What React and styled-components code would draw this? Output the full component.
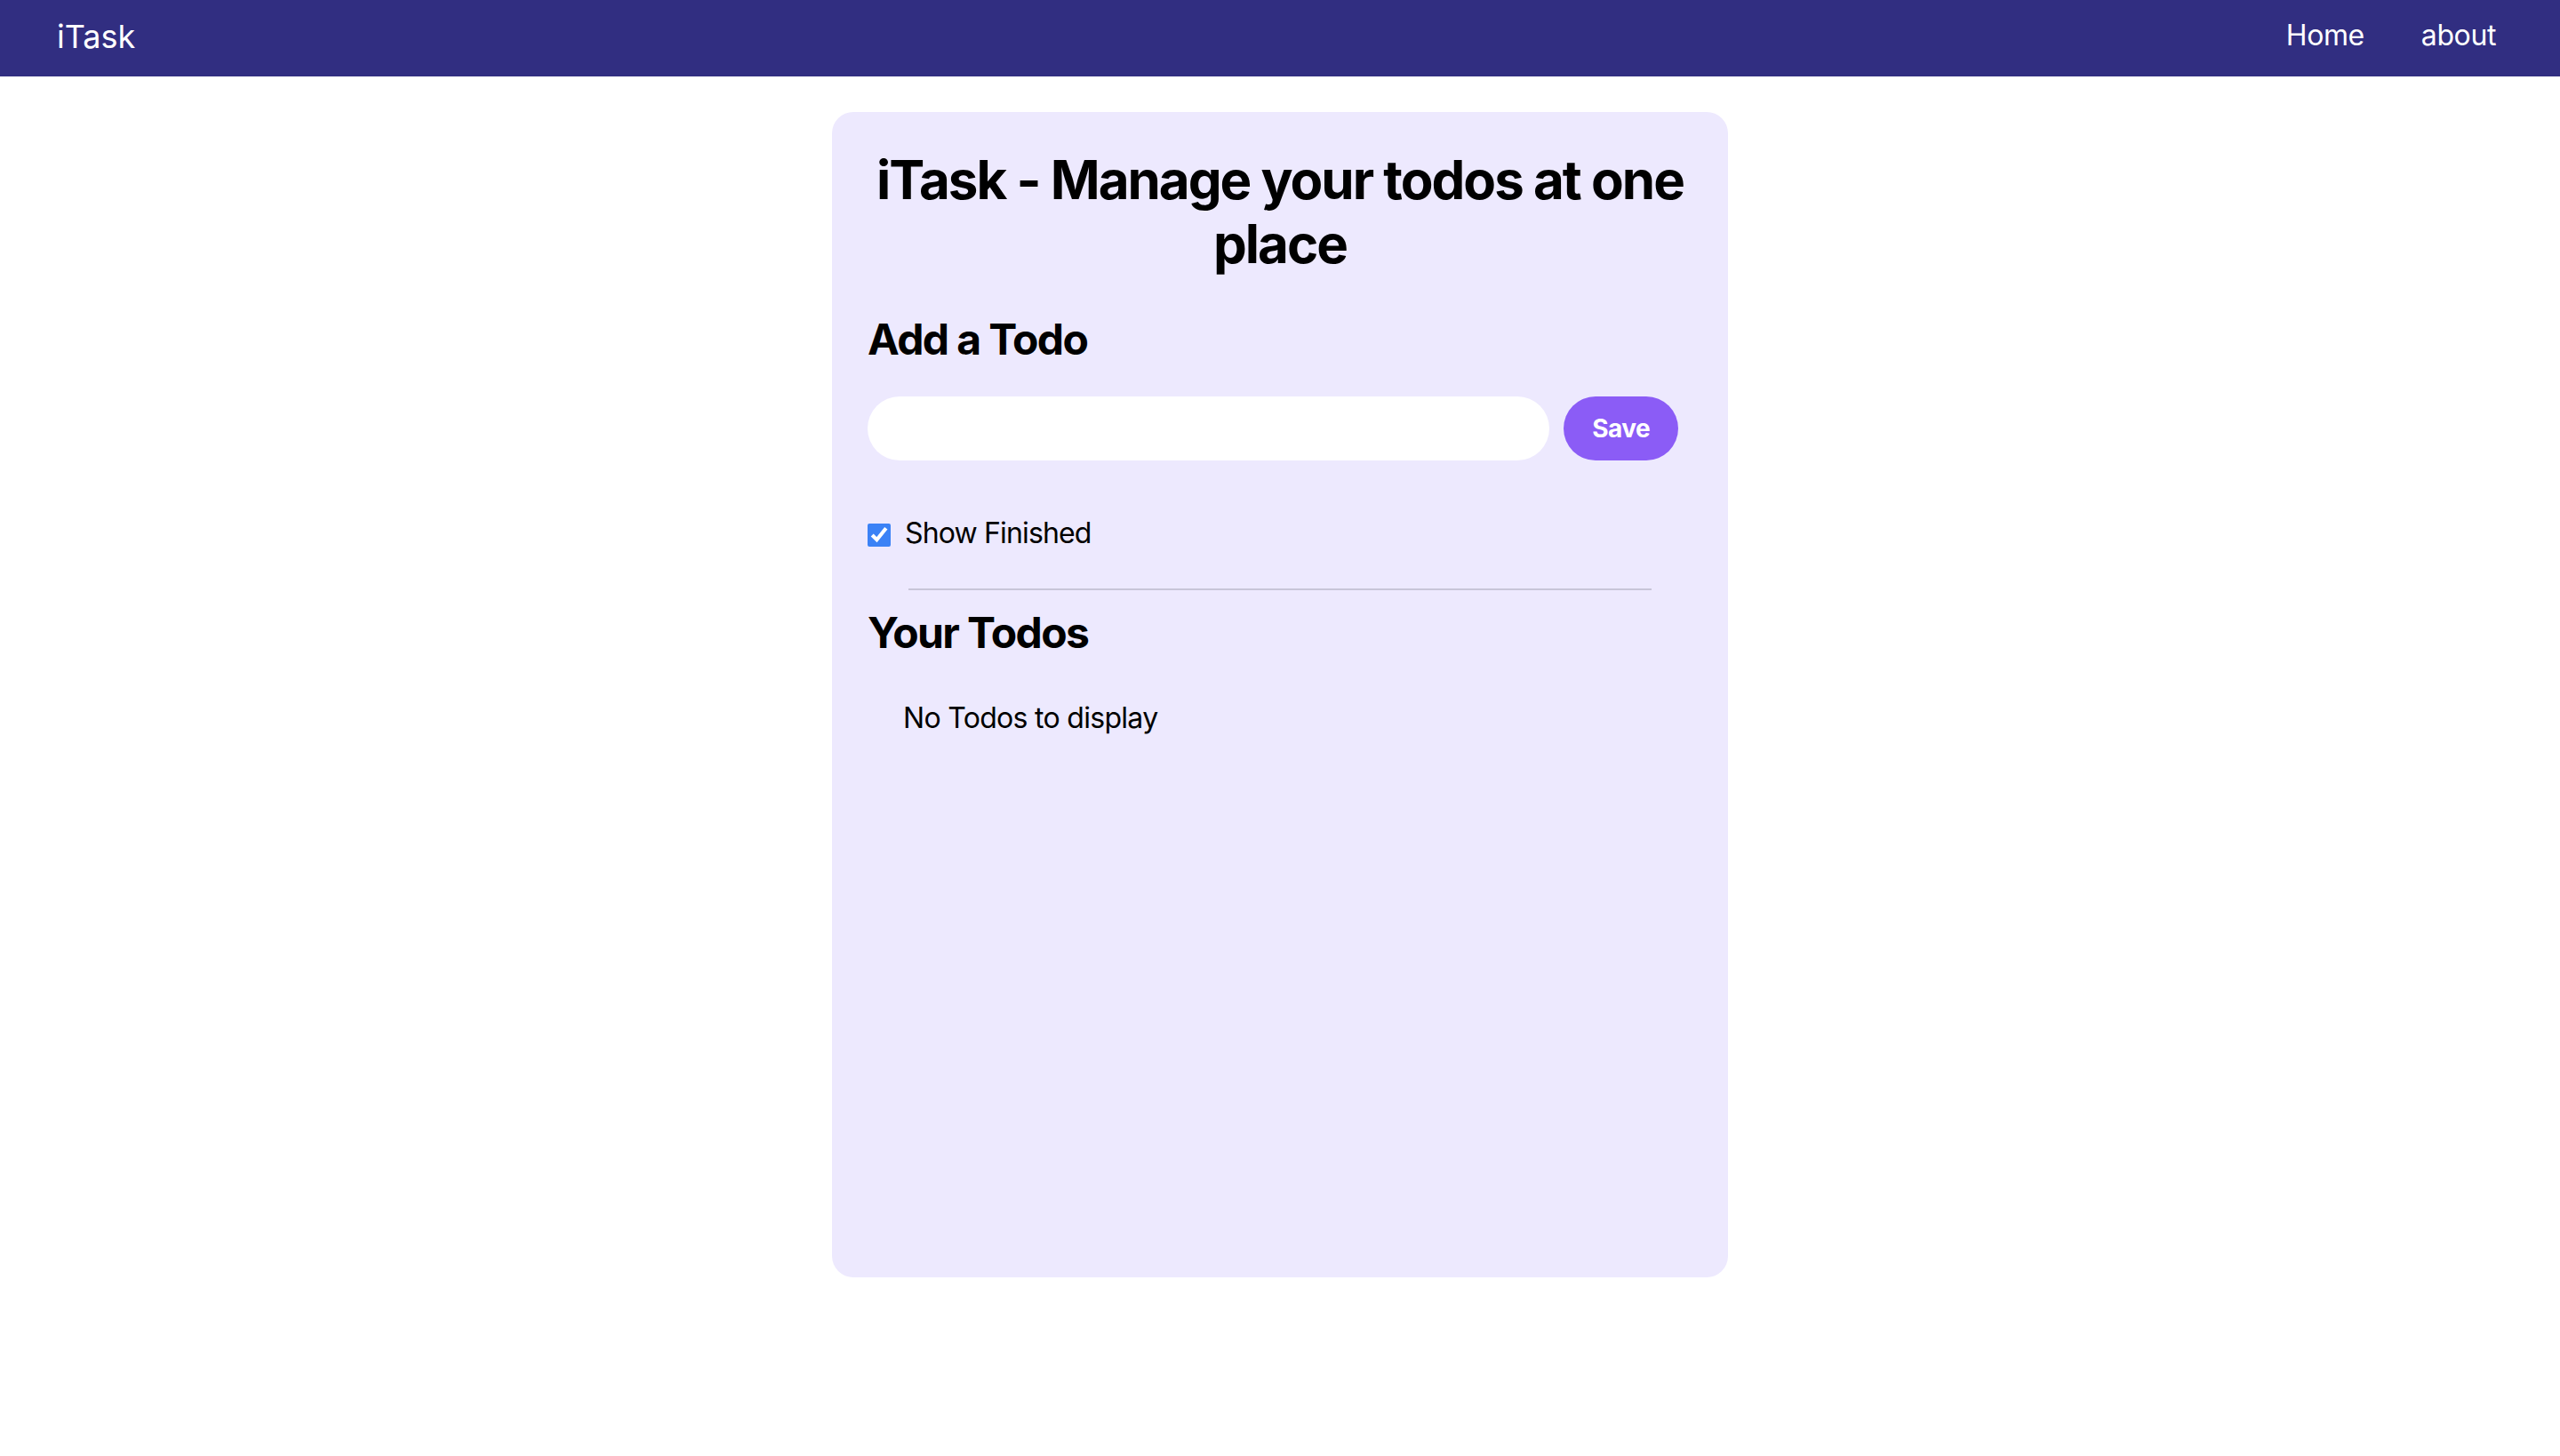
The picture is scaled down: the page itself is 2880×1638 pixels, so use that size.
import React, {useState} from "react";
import styled, {createGlobalStyle} from "styled-components";

const GlobalStyle = createGlobalStyle`
  body {
    margin: 0;
    background: #ffffff;
    font-family: Inter, "Noto Sans", "Liberation Sans", sans-serif;
    color: #000;
  }
`;

const Navbar = styled.nav`
  display: flex;
  justify-content: space-between;
  align-items: flex-start;
  height: 86px;
  box-sizing: border-box;
  padding-top: 16px;
  background: #312e81;
  color: #ffffff;
`;

const Logo = styled.span`
  margin: 0 64px;
  font-size: 36px;
  line-height: 50px;
`;

const NavList = styled.ul`
  display: flex;
  gap: 64px;
  margin: 0 72px;
  padding: 0;
  list-style: none;
`;

const NavItem = styled.li`
  font-size: 32px;
  line-height: 48px;
  letter-spacing: -0.4px;
  cursor: pointer;
`;

const Card = styled.main`
  width: 1008px;
  min-height: 1311px;
  box-sizing: border-box;
  margin: 40px auto;
  padding: 40px;
  border-radius: 24px;
  background: #ede9fe;
`;

const Title = styled.h1`
  margin: 0;
  font-size: 60px;
  line-height: 72px;
  font-weight: 700;
  text-align: center;
  letter-spacing: -2px;
`;

const AddSection = styled.section`
  display: flex;
  flex-direction: column;
  gap: 32px;
  margin-top: 40px;
`;

const Heading = styled.h2`
  margin: ${p => p.$top || 0}px 0 0;
  font-size: 48px;
  line-height: 64px;
  font-weight: 700;
  letter-spacing: -1.6px;
`;

const InputRow = styled.div`
  display: flex;
`;

const TodoInput = styled.input`
  flex: 1;
  height: 72px;
  box-sizing: border-box;
  padding: 0 40px;
  border: none;
  border-radius: 9999px;
  background: #ffffff;
  font: inherit;
  font-size: 32px;
  outline: none;
`;

const SaveButton = styled.button`
  margin: 0 16px;
  height: 72px;
  padding: 0 32px;
  border: none;
  border-radius: 9999px;
  background: #8b5cf6;
  color: #ffffff;
  font-family: inherit;
  font-size: 28px;
  font-weight: 700;
  letter-spacing: -0.6px;
  cursor: pointer;
`;

const FinishedRow = styled.div`
  display: flex;
  align-items: center;
  margin-top: 58px;
  height: 48px;
`;

const Check = styled.input`
  width: 26px;
  height: 26px;
  margin: 4px 0 0;
  accent-color: #3b82f6;
`;

const CheckLabel = styled.label`
  margin: 0 16px;
  font-size: 32px;
  line-height: 48px;
  letter-spacing: -0.85px;
`;

const Divider = styled.div`
  width: 90%;
  height: 2px;
  margin: 38px auto 0;
  background: #c8c5d8;
`;

const Empty = styled.div`
  margin: 40px;
  font-size: 32px;
  line-height: 48px;
  letter-spacing: -0.7px;
`;

const App = () => {
    const [todo, setTodo] = useState("");
    const [showFinished, setShowFinished] = useState(true);

    return (
        <>
            <GlobalStyle/>
            <Navbar>
                <Logo>iTask</Logo>
                <NavList>
                    <NavItem>Home</NavItem>
                    <NavItem>about</NavItem>
                </NavList>
            </Navbar>
            <Card>
                <Title>iTask - Manage your todos at one place</Title>
                <AddSection>
                    <Heading>Add a Todo</Heading>
                    <InputRow>
                        <TodoInput value={todo} onChange={e => setTodo(e.target.value)}/>
                        <SaveButton>Save</SaveButton>
                    </InputRow>
                </AddSection>
                <FinishedRow>
                    <Check
                        id="show"
                        type="checkbox"
                        checked={showFinished}
                        onChange={() => setShowFinished(!showFinished)}
                    />
                    <CheckLabel htmlFor="show">Show Finished</CheckLabel>
                </FinishedRow>
                <Divider/>
                <Heading $top={16}>Your Todos</Heading>
                <Empty>No Todos to display</Empty>
            </Card>
        </>
    );
}

export default App;
